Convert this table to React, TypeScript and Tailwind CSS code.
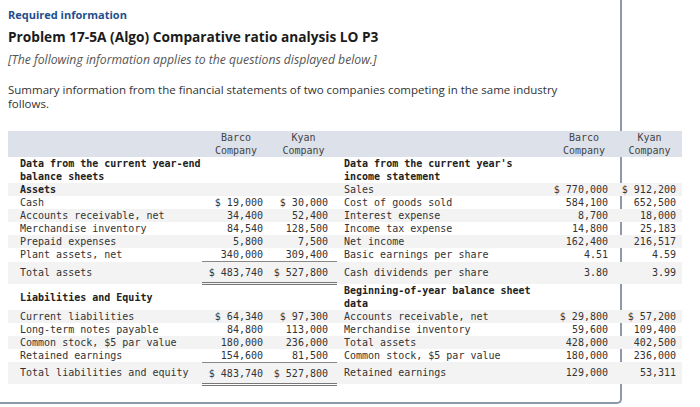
type Row = {
  l: string;
  lBold?: boolean;
  b?: string;
  k?: string;
  r: string;
  rBold?: boolean;
  rb?: string;
  rk?: string;
  line?: "single" | "double";
  lPad?: string;
};

const rows: Row[] = [
  { l: "Data from the current year-end\nbalance sheets", lBold: true, r: "Data from the current year's\nincome statement", rBold: true },
  { l: "Assets", lBold: true, r: "Sales", rb: "$ 770,000", rk: "$ 912,200" },
  { l: "Cash", b: "$ 19,000", k: "$ 30,000", r: "Cost of goods sold", rb: "584,100", rk: "652,500" },
  { l: "Accounts receivable, net", b: "34,400", k: "52,400", r: "Interest expense", rb: "8,700", rk: "18,000" },
  { l: "Merchandise inventory", b: "84,540", k: "128,500", r: "Income tax expense", rb: "14,800", rk: "25,183" },
  { l: "Prepaid expenses", b: "5,800", k: "7,500", r: "Net income", rb: "162,400", rk: "216,517" },
  { l: "Plant assets, net", b: "340,000", k: "309,400", r: "Basic earnings per share", rb: "4.51", rk: "4.59", line: "single" },
  { l: "Total assets", b: "$ 483,740", k: "$ 527,800", r: "Cash dividends per share", rb: "3.80", rk: "3.99", line: "double" },
  { l: "Liabilities and Equity", lBold: true, lPad: "pt-[7px]", r: "Beginning-of-year balance sheet\ndata", rBold: true },
  { l: "Current liabilities", b: "$ 64,340", k: "$ 97,300", r: "Accounts receivable, net", rb: "$ 29,800", rk: "$ 57,200" },
  { l: "Long-term notes payable", b: "84,800", k: "113,000", r: "Merchandise inventory", rb: "59,600", rk: "109,400" },
  { l: "Common stock, $5 par value", b: "180,000", k: "236,000", r: "Total assets", rb: "428,000", rk: "402,500" },
  { l: "Retained earnings", b: "154,600", k: "81,500", r: "Common stock, $5 par value", rb: "180,000", rk: "236,000", line: "single" },
  { l: "Total liabilities and equity", b: "$ 483,740", k: "$ 527,800", r: "Retained earnings", rb: "129,000", rk: "53,311", line: "double" },
];

export default function App() {
  return (
    <div className="h-[407px] w-[700px] bg-white font-['Open_Sans',sans-serif]">
      <div className="h-[404px] w-[622px] rounded-br-[5px] border-r-2 border-b-2 border-[#8d99ab] pt-[7px]">
        <p className="px-2 text-[11px] leading-[16px] font-bold text-[#1f4e8c]">Required information</p>
        <h1 className="mt-[5px] px-2 text-[13.7px] leading-[18px] font-bold text-[#1b1b1b]">
          Problem 17-5A (Algo) Comparative ratio analysis LO P3
        </h1>
        <p className="mt-[6px] px-2 text-[12.2px] leading-[16px] italic text-[#555]">
          [The following information applies to the questions displayed below.]
        </p>
        <p className="mt-[15px] px-2 text-[11.5px] leading-[14px] text-[#333]">
          Summary information from the financial statements of two companies competing in the same industry
          <br />
          follows.
        </p>

        <table className="mt-[20px] ml-2 w-[674px] table-fixed border-collapse font-['DejaVu_Sans_Mono',monospace] text-[10px] leading-[13px] text-[#333]">
          <colgroup>
            <col className="w-[194px]" />
            <col className="w-[68px]" />
            <col className="w-[67px]" />
            <col className="w-[214px]" />
            <col className="w-[66px]" />
            <col className="w-[65px]" />
          </colgroup>
          <thead>
            <tr className="bg-[#dde1ea] text-[#444]">
              <th />
              <th className="text-center font-normal">Barco<br />Company</th>
              <th className="text-center font-normal">Kyan<br />Company</th>
              <th />
              <th className="text-center font-normal">Barco<br />Company</th>
              <th className="text-center font-normal">Kyan<br />Company</th>
            </tr>
          </thead>
          <tbody>
            {rows.map((row, i) => {
              const tall = row.line === "double" ? "pt-[4px] pb-[3px]" : "";
              const edge =
                row.line === "single"
                  ? "border-b border-[#888]"
                  : row.line === "double"
                    ? "border-b-[3px] border-double border-[#777]"
                    : "";
              return (
                <tr key={i} className={i % 2 === 1 ? "bg-[#f3f3f3]" : ""}>
                  <td className={`whitespace-pre-line pl-3 align-top ${tall} ${row.lPad ?? ""} ${row.lBold ? "font-bold text-[#222]" : ""}`}>
                    {row.l}
                  </td>
                  <td className={`pr-[7px] text-right align-top whitespace-nowrap ${tall} ${edge}`}>{row.b}</td>
                  <td className={`pr-[9px] text-right align-top whitespace-nowrap ${tall} ${edge}`}>{row.k}</td>
                  <td className={`whitespace-pre-line pl-[7px] align-top ${tall} ${row.rBold ? "font-bold text-[#222]" : ""}`}>
                    {row.r}
                  </td>
                  <td className={`pr-[9px] text-right align-top whitespace-nowrap ${tall}`}>{row.rb}</td>
                  <td className={`pr-[6px] text-right align-top whitespace-nowrap ${tall}`}>{row.rk}</td>
                </tr>
              );
            })}
          </tbody>
        </table>
      </div>
    </div>
  );
}
